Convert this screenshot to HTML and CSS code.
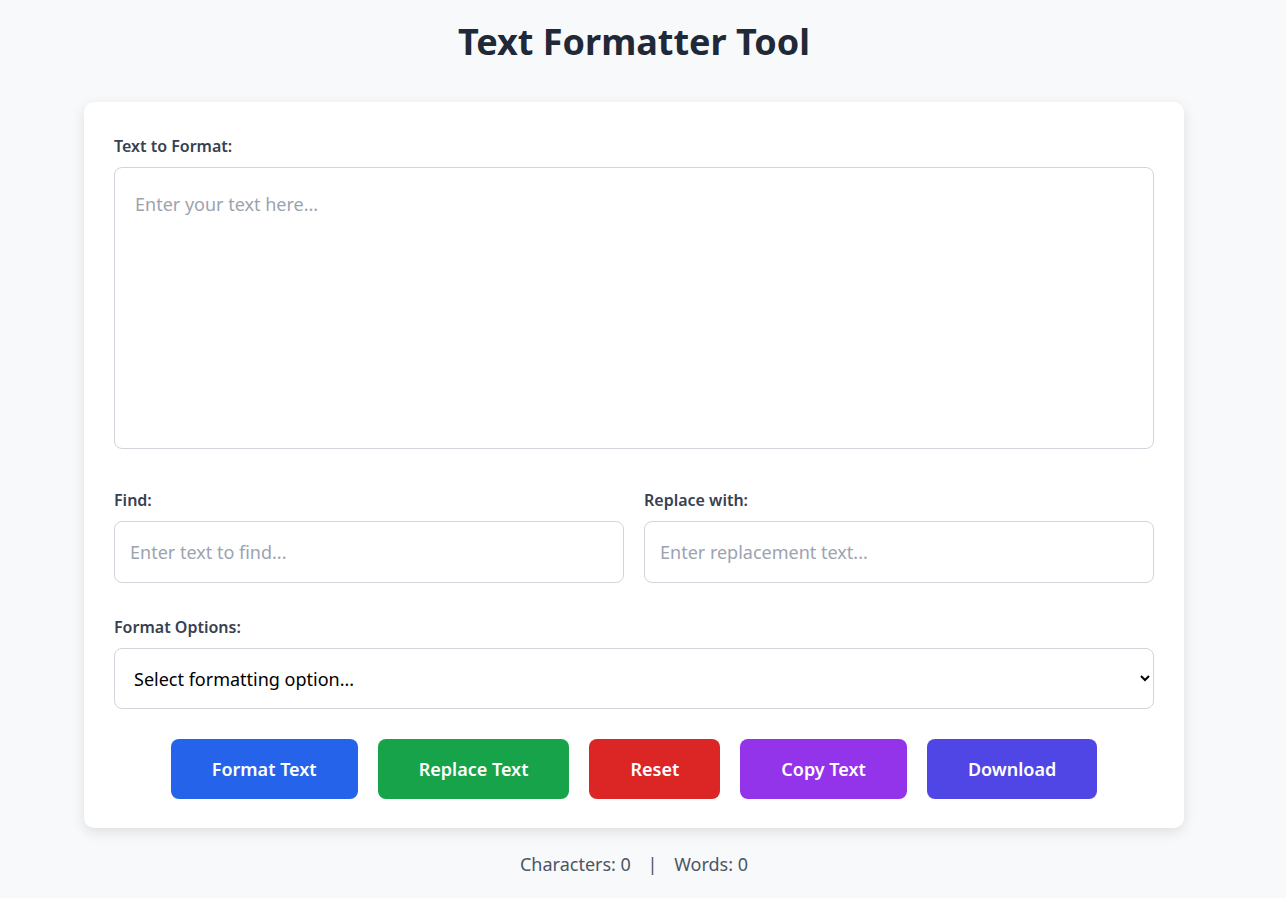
FILE: index.html
```
<!DOCTYPE html>
<html lang="en">
<head>
<meta charset="utf-8">
<title>Text Formatter Tool</title>
<link rel="stylesheet" href="styles.css">
</head>
<body>
<div class="page">
  <h1 class="title">Text Formatter Tool</h1>
  <div class="card">
    <div class="group group-text">
      <label class="label" for="text">Text to Format:</label>
      <textarea id="text" class="textarea" placeholder="Enter your text here..."></textarea>
    </div>
    <div class="row">
      <div class="group col">
        <label class="label" for="find">Find:</label>
        <input id="find" class="input" type="text" placeholder="Enter text to find...">
      </div>
      <div class="group col">
        <label class="label" for="replace">Replace with:</label>
        <input id="replace" class="input" type="text" placeholder="Enter replacement text...">
      </div>
    </div>
    <div class="group">
      <label class="label" for="fmt">Format Options:</label>
      <select id="fmt" class="select">
        <option>Select formatting option...</option>
        <option>UPPERCASE</option>
        <option>lowercase</option>
        <option>Title Case</option>
      </select>
    </div>
    <div class="buttons">
      <button class="btn btn-blue">Format Text</button>
      <button class="btn btn-green">Replace Text</button>
      <button class="btn btn-red">Reset</button>
      <button class="btn btn-purple">Copy Text</button>
      <button class="btn btn-indigo">Download</button>
    </div>
  </div>
  <div class="stats">Characters: 0 <span class="sep">|</span> Words: 0</div>
</div>
</body>
</html>
```

FILE: styles.css
```
* { box-sizing: border-box; }
body {
  margin: 0;
  background: #f8f9fb;
  font-family: "Noto Sans", "Open Sans", sans-serif;
  color: #1f2937;
}
.page {
  padding: 20px 18px 0 0;
  display: flex;
  flex-direction: column;
  align-items: center;
}
.title {
  margin: 0 0 39px;
  font-size: 36px;
  line-height: 43px;
  font-weight: 700;
  color: #1f2937;
}
.card {
  width: 1100px;
  background: #fff;
  border-radius: 10px;
  box-shadow: 0 4px 14px rgba(0,0,0,0.11);
  padding: 30px 30px 29px;
}
.group {
  display: flex;
  flex-direction: column;
  margin-bottom: 30px;
}
.group-text { margin-bottom: 37px; }
.label {
  font-size: 16px;
  line-height: 24px;
  padding-top: 2px;
  font-weight: 600;
  color: #374151;
  margin-bottom: 9px;
}
.textarea {
  display: block;
  width: 100%;
  height: 282px;
  border: 1px solid #d1d5db;
  border-radius: 8px;
  padding: 23px 20px 20px;
  font-family: inherit;
  font-size: 18px;
  line-height: 1.5;
  resize: none;
}
.row {
  display: flex;
  gap: 20px;
}
.col { flex: 1; }
.input {
  width: 100%;
  height: 62px;
  border: 1px solid #d1d5db;
  border-radius: 8px;
  padding: 0 15px;
  font-family: inherit;
  font-size: 18px;
}
.select {
  width: 100%;
  height: 61px;
  border: 1px solid #d1d5db;
  border-radius: 8px;
  padding: 0 15px;
  font-family: inherit;
  font-size: 18px;
  color: #000;
  background: #fff;
}
.textarea::placeholder, .input::placeholder { color: #9ca3af; }
.buttons {
  display: flex;
  justify-content: center;
  gap: 20px;
}
.btn {
  height: 60px;
  border: none;
  border-radius: 8px;
  padding: 0 41px;
  font-family: inherit;
  font-size: 18px;
  font-weight: 600;
  color: #fff;
  cursor: pointer;
}
.btn-blue { background: #2563eb; }
.btn-green { background: #16a34a; }
.btn-red { background: #dc2626; }
.btn-purple { background: #9333ea; }
.btn-indigo { background: #4f46e5; }
.stats {
  margin-top: 23px;
  font-size: 18px;
  line-height: 27px;
  color: #4b5563;
}
.sep { margin: 0 12px; }
```
